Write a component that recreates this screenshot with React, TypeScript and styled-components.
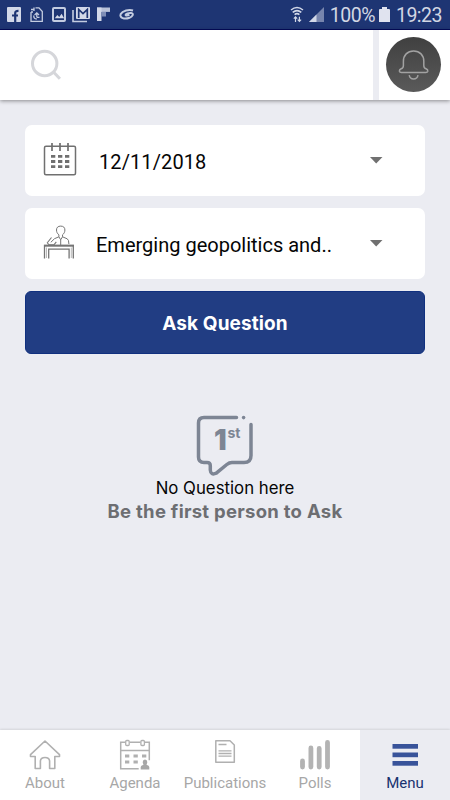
import React from "react";
import styled, { createGlobalStyle } from "styled-components";

const GlobalStyle = createGlobalStyle`
  * { box-sizing: border-box; }
  body { margin: 0; background: #ebecf2; font-family: Roboto, "Noto Sans", sans-serif; }
  svg { display: block; flex: none; }
`;

const Screen = styled.div`
  width: 450px;
  height: 800px;
  display: flex;
  flex-direction: column;
  background: #ebecf2;
  overflow: hidden;
`;

const StatusBar = styled.div`
  flex: none;
  height: 30px;
  display: flex;
  align-items: center;
  justify-content: space-between;
  padding: 0 8px 0 6px;
  background: #1e3573;
  border-bottom: 1px solid #040b5b;
  color: #d2d7e3;
`;

const StatusGroup = styled.div`
  display: flex;
  align-items: center;
`;

const StatusText = styled.span<{ $spacing: number }>`
  font-size: 19.5px;
  line-height: 29px;
  letter-spacing: ${(p) => p.$spacing}px;
  white-space: nowrap;
  padding-top: 1px;
`;

const Header = styled.header`
  flex: none;
  height: 70px;
  display: flex;
  background: #ebecf2;
  box-shadow: 0 1px 4px rgba(0, 0, 0, 0.42);
`;

const SearchBox = styled.div`
  width: 373px;
  padding: 19px 0 0 30px;
  background: #fff;
`;

const BellBox = styled.div`
  margin-left: 6px;
  display: flex;
  flex: 1;
  padding: 7px 0 0 7px;
  background: #fff;
`;

const BellButton = styled.div`
  width: 55px;
  height: 55px;
  border-radius: 50%;
  background: linear-gradient(#404040, #5a5a5a);
  display: flex;
  align-items: center;
  justify-content: center;
`;

const Content = styled.main`
  flex: 1;
  padding: 25px 25px 0;
  display: flex;
  flex-direction: column;
`;

const Select = styled.div<{ $gap: number }>`
  height: 70.5px;
  margin-bottom: 12.7px;
  padding: 0 42px 0 18px;
  display: flex;
  align-items: center;
  background: #fff;
  border-radius: 7px;

  & > span {
    margin-left: ${(p) => p.$gap}px;
    flex: 1;
  }
`;

const SelectText = styled.span<{ $spacing: number }>`
  font-size: 20px;
  line-height: 24px;
  letter-spacing: ${(p) => p.$spacing}px;
  color: #050505;
  white-space: nowrap;
  padding-top: 3px;
`;

const AskButton = styled.div`
  height: 63px;
  margin-top: -0.3px;
  padding-top: 2px;
  display: flex;
  align-items: center;
  justify-content: center;
  border-radius: 6px;
  background: #213d83;
  border: 1px solid #10307f;
  color: #fff;
  font: 700 19px/24px Inter, sans-serif;
  letter-spacing: 0.1px;
`;

const Empty = styled.section`
  display: flex;
  flex-direction: column;
  align-items: center;
  margin-top: 60px;
`;

const EmptyTitle = styled.div`
  font: 400 16.8px/22px Inter, sans-serif;
  color: #050505;
  margin-top: 1px;
  white-space: nowrap;
`;

const EmptyHint = styled.div`
  font: 700 18.5px/24px Inter, sans-serif;
  letter-spacing: 0.27px;
  color: #6d6e72;
  white-space: nowrap;
`;

const Nav = styled.nav`
  flex: none;
  height: 70px;
  display: grid;
  grid-template-columns: repeat(5, 90px);
  background: #fff;
  box-shadow: 0 -1px 2px rgba(0, 0, 0, 0.1);
`;

const Tab = styled.div<{ $active?: boolean }>`
  display: flex;
  flex-direction: column;
  align-items: center;
  padding-top: 8px;
  background: ${(p) => (p.$active ? "#ebecf2" : "#fff")};
  color: ${(p) => (p.$active ? "#18326f" : "#a7a7a7")};
`;

const TabLabel = styled.span`
  font-size: 15px;
  line-height: 18px;
  margin-top: 2px;
`;

const NotificationIcons = () => (
  <svg width="130" height="20" viewBox="6 5 130 20" fill="none" stroke="#c3cce0" strokeWidth="1.6">
    <rect x="7" y="7" width="14" height="15" rx="1" fill="#d2d8e8" stroke="none" />
    <path d="M15.2 22v-9q0-2.3 3.3-2.2M12 15.5h6" stroke="#1e3573" strokeWidth="2.2" />
    <path d="M31 12v9.3h11.3V11.500L39 7.800h-3.500M31 9.500h2.500M34 7.500v3.500M31 12h2" strokeWidth="1.3" />
    <path d="M33.800 15.500q-.3 3.500 3 3.500M36.800 17.500v-4.500m-2.200 2l2.200-2.200 2.200 2.200M37 17.300h2.500" strokeWidth="1.3" />
    <rect x="53" y="8" width="12" height="13" rx="1" strokeWidth="2" />
    <path d="M54.8 18.3l2.5-3.2 2 2 2.3-3.4 2.5 4.6z" fill="#d2d8e8" stroke="none" />
    <path d="M73 10v11.5h14" />
    <rect x="76" y="7" width="14" height="12" rx="1" fill="#d2d8e8" stroke="none" />
    <path d="M78.7 18V9.500l4.300 4 4.300-4V18" stroke="#1e3573" strokeWidth="1.7" />
    <path d="M97 7.5h13v4.400H97z" fill="#b9c2d8" stroke="none" />
    <path d="M97 7.5h4.500V21H97z" fill="#d2d8e8" stroke="none" />
    <path d="M101.5 12h4.500v4.500h-4.500z" fill="#7f8eb6" stroke="none" />
    <path d="M133 10.5c-4-1.500-10.500.300-12.300 3.600-1.700 3.900 4 5.500 8.700 3.700 3.400-1.400 4.800-4.300 1.800-4.700-2.600-.3-5.200.7-5.600 1.700-.2.900 2 .9 3.800.1" strokeWidth="2" />
  </svg>
);

const SignalIcons = () => (
  <svg width="41" height="20" viewBox="289 5 41 20" fill="none" stroke="#d2d8e8">
    <path d="M291 10q6-5 12 0M292.7 12.4q4.3-3.6 8.6 0M294.6 14.6q2.4-2 4.8 0" strokeWidth="1.5" />
    <path d="M295.5 22v-5m-1.7 1.6l1.7-1.7 1.7 1.7M299.4 16.8v4.5m-1.7-1.6l1.7 1.7 1.7-1.7" strokeWidth="1.2" />
    <path d="M309 22L324 7v15z" fill="#7785ad" stroke="none" />
    <path d="M309 22l7.5-7.5V22z" fill="#d2d8e8" stroke="none" />
  </svg>
);

const BatteryIcon = () => (
  <svg width="11" height="16" viewBox="0 0 11 16" fill="#e0e3ef">
    <path d="M3 0h5v2h2q1 0 1 1v12H0V3q0-1 1-1h2z" />
  </svg>
);

const SearchIcon = () => (
  <svg width="32" height="32" viewBox="30 49 32 32" fill="none" stroke="#d5d6da" strokeWidth="3">
    <circle cx="44.7" cy="63.5" r="12.2" />
    <path d="M53.7 72.2l6.2 6.6" />
  </svg>
);

const BellIcon = () => (
  <svg width="32" height="32" viewBox="398 49 32 32" fill="none" stroke="#a2a2a2" strokeWidth="1.5" strokeLinejoin="round">
    <path d="M401.2 68.8q2.2-.7 2.2-3.3v-4.3c0-6 4-10.2 10.2-10.2s10.2 4.2 10.2 10.2v4.3q0 2.6 2.2 3.3 2 .9 1.8 2.4-.3 1.2-2 1.2h-24.4q-1.7 0-2-1.2-.2-1.5 1.8-2.4z" />
    <path d="M409.2 75.2q.7 3.8 4.4 3.8t4.4-3.8" />
  </svg>
);

const CalendarIcon = () => (
  <svg width="34" height="36" viewBox="43 143 34 36" fill="none" stroke="#707070" strokeWidth="1.5">
    <rect x="44.5" y="147.3" width="31" height="28.5" rx="1.5" />
    <path d="M52 144v8M60 144v8M68 144v8" strokeWidth="1.7" />
    <path d="M51 157.3h4.3m2.7 0h4.3m2.7 0h4.3M51 162.5h4.3m2.7 0h4.3m2.7 0h4.3M51 167.7h4.3m2.7 0h4.3m2.7 0h4.3" strokeWidth="2.8" />
  </svg>
);

const SpeakerIcon = () => (
  <svg width="32" height="36" viewBox="43 226 32 36" fill="none" stroke="#757575" strokeWidth="1">
    <path d="M44.5 259.5V246.5H73.3V259.5M48.7 259.5v-9.3H69.1v9.3" strokeWidth="1.3" />
    <path d="M44 246.7h30" strokeWidth="1.8" />
    <path d="M46.5 259v-10.5M71.3 259v-10.5" strokeWidth=".5" />
    <path d="M58.9 237.8v-2c-1.7-1.2-2.4-3-2.4-4.8 0-2.5 1.5-3.9 4.2-3.9s4.2 1.4 4.2 3.9c0 1.8-.7 3.6-2.4 4.8v2l4.7 2q1.7.8 1.7 5.2M58.9 237.8l-4.4 1.9-3.7 3.6M58.9 237.8l1.8 3 1.8-3M60.7 241v5" />
    <path d="M47 243.5l2 2.3h5l2.3-3M47.5 243.5l4-5" strokeWidth="1.1" />
  </svg>
);

const Caret = () => (
  <svg width="14" height="8" viewBox="0 0 14 8">
    <path d="M1 1h12.5L7.2 7.500z" fill="#707070" />
  </svg>
);

const Bubble = styled.div`
  position: relative;
  width: 58px;
  height: 62px;
  color: #7d8594;
`;

const First = styled.span`
  position: absolute;
  left: 18px;
  top: 12px;
  font: 900 28px/28px Inter, sans-serif;
`;

const Suffix = styled.span`
  position: absolute;
  left: 31.5px;
  top: 11px;
  font: 700 14px/16px Inter, sans-serif;
`;

const BubbleIcon = () => (
  <svg width="58" height="62" viewBox="196 414 58 62" fill="none" stroke="#7d8594" strokeWidth="3.5" strokeLinecap="round" strokeLinejoin="round">
    <path d="M236.5 417.5H204q-5.5 0-5.5 5.5v34q0 5.500 5.500 5.500h3q3.300 0 3.300 3v4.500q.3 5.500 6 3.200l10.500-8.700q2.500-2 5.200-2H244q7 0 7-7V424.500" />
    <circle cx="243.6" cy="417.6" r="1.8" fill="#7d8594" stroke="none" />
  </svg>
);

const HomeIcon = () => (
  <svg width="34" height="34" viewBox="28 738 34 34" fill="none" stroke="#b0b0b0" strokeWidth="1.6" strokeLinejoin="round">
    <path d="M45 741l-14.5 13.7v1.8h4.7v12h5.2v-7.7q.4-3.3 4.6-3.3t4.6 3.3v7.7h5.2v-12h4.7v-1.8z" />
  </svg>
);

const AgendaIcon = () => (
  <svg width="34" height="34" viewBox="118 738 34 34" fill="none" stroke="#b0b0b0" strokeWidth="1.5">
    <path d="M125.3 742.2h-4.6v26.6h18M129.7 742.2h10.8M144.8 742.2h4.5v18M120.7 750.5h28.6" />
    <rect x="125.7" y="740.5" width="3.5" height="5" rx="1" strokeWidth="1.3" />
    <rect x="140.9" y="740.5" width="3.5" height="5" rx="1" strokeWidth="1.3" />
    <path d="M125 756h4.3m4.2 0h4.3m4.2 0h4.3M125 762h4.3m4.2 0h4.3" strokeWidth="3.2" />
    <path d="M140.7 769.5v-2.6q0-1.4 2.8-2.1-2.1-4.500 1.500-5.300 3.600.8 1.500 5.300 2.800.7 2.800 2.100v2.600z" fill="#a7a7a7" stroke="none" />
  </svg>
);

const PublicationsIcon = () => (
  <svg width="34" height="34" viewBox="208 738 34 34" fill="none" stroke="#b0b0b0" strokeWidth="1.5" strokeLinejoin="round">
    <path d="M215.8 740.7h14.2l4.3 4.3v17.2h-18.5z" />
    <path d="M218.500 744.500h8M218.500 750.800h13M218.500 753.500h13M218.500 756.200h13" strokeWidth="1.3" />
  </svg>
);

const PollsIcon = () => (
  <svg width="34" height="34" viewBox="298 738 34 34" fill="none" stroke="#b3b3b3" strokeWidth="4.8" strokeLinecap="round">
    <path d="M302.5 761v6M310.9 748v19M319.2 748.5v18.5M327.5 742.5v24.5" />
  </svg>
);

const MenuIcon = () => (
  <svg width="34" height="34" viewBox="388 738 34 34" fill="#38539a">
    <rect x="392.5" y="744" width="25.5" height="4.7" />
    <rect x="392.5" y="752.5" width="25.5" height="4.7" />
    <rect x="392.5" y="761" width="25.5" height="4.7" />
  </svg>
);

const tabs = [
  { label: "About", Icon: HomeIcon },
  { label: "Agenda", Icon: AgendaIcon },
  { label: "Publications", Icon: PublicationsIcon },
  { label: "Polls", Icon: PollsIcon },
  { label: "Menu", Icon: MenuIcon, active: true },
];

const Percent = styled(StatusGroup)`
  gap: 4px;
`;

const Clock = styled(StatusGroup)`
  margin-left: 6px;
`;

export default function App() {
  return (
    <>
      <GlobalStyle />
      <Screen>
        <StatusBar>
          <NotificationIcons />
          <StatusGroup>
            <SignalIcons />
            <Percent>
              <StatusText $spacing={-0.5}>100%</StatusText>
              <BatteryIcon />
            </Percent>
            <Clock>
              <StatusText $spacing={-0.5}>19:23</StatusText>
            </Clock>
          </StatusGroup>
        </StatusBar>
        <Header>
          <SearchBox>
            <SearchIcon />
          </SearchBox>
          <BellBox>
            <BellButton>
              <BellIcon />
            </BellButton>
          </BellBox>
        </Header>
        <Content>
          <Select $gap={22}>
            <CalendarIcon />
            <SelectText $spacing={0.1}>12/11/2018</SelectText>
            <Caret />
          </Select>
          <Select $gap={21}>
            <SpeakerIcon />
            <SelectText $spacing={0}>Emerging geopolitics and..</SelectText>
            <Caret />
          </Select>
          <AskButton>Ask Question</AskButton>
          <Empty>
            <Bubble>
              <BubbleIcon />
              <First>1</First>
              <Suffix>st</Suffix>
            </Bubble>
            <EmptyTitle>No Question here</EmptyTitle>
            <EmptyHint>Be the first person to Ask</EmptyHint>
          </Empty>
        </Content>
        <Nav>
          {tabs.map(({ label, Icon, active }) => (
            <Tab key={label} $active={active}>
              <Icon />
              <TabLabel>{label}</TabLabel>
            </Tab>
          ))}
        </Nav>
      </Screen>
    </>
  );
}
